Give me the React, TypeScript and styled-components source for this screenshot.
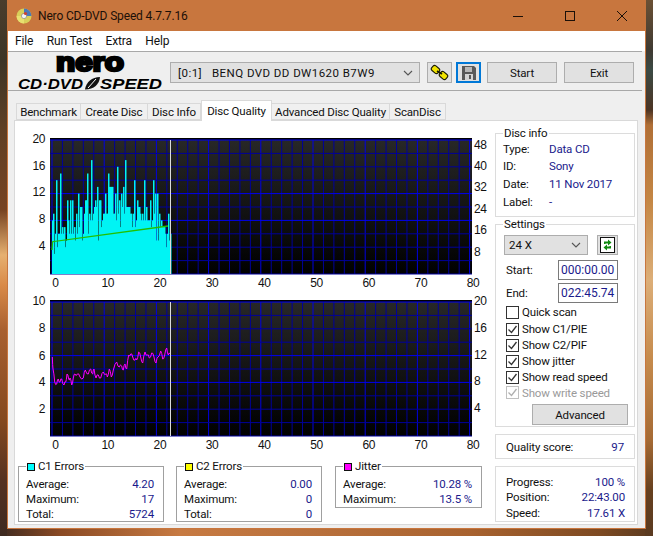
import React from 'react';
import styled, { createGlobalStyle } from 'styled-components';

const GlobalStyle = createGlobalStyle`
  html, body {
    margin: 0;
    padding: 0;
    background: #5a3a22;
  }
  * {
    box-sizing: border-box;
  }
`;

const UI_FONT = 'Roboto, "Liberation Sans", Arial, sans-serif';
const CHART_FONT = '"Liberation Sans", Arial, sans-serif';
const NAVY = '#1a1a8c';

const Page = styled.div`
  width: 653px;
  height: 536px;
  overflow: hidden;
  font-family: ${UI_FONT};
  font-size: 11.5px;
  letter-spacing: -0.15px;
  color: #111;
  background:
    linear-gradient(to bottom, #4a3d2c 0, #3c3426 60px, #5f3f24 130px, #764322 210px, #e6b070 255px, #d98a48 285px, #a86030 330px, #84491f 420px, #553120 480px, #3e2a20 536px) left top / 7px 100% no-repeat,
    linear-gradient(to bottom, #6b5034 0, #3f3a32 50px, #3b4a44 70px, #4c3424 110px, #b06f36 125px, #c48644 200px, #dcae78 280px, #c58a4c 360px, #a56a34 440px, #66401f 490px, #5a3a20 536px) right top / 8px 100% no-repeat,
    linear-gradient(to right, #3e2a20 0, #8a4a24 60px, #c77a42 180px, #b8703c 320px, #a8622f 470px, #7d4a22 600px, #5a3a20 653px);
`;

const Window = styled.div`
  width: 639px;
  height: 529px;
  margin-left: 7px;
  display: flex;
  flex-direction: column;
  background: #efefef;
  border: 1px solid #c8763e;
  border-top: none;
`;

const TitleBar = styled.div`
  height: 31px;
  flex-shrink: 0;
  display: flex;
  align-items: center;
  padding-left: 8px;
  gap: 6px;
  background: #c8763e;
  color: #1c1008;
  font-size: 12px;
  letter-spacing: -0.15px;
`;

const TitleText = styled.span`
  flex: 1;
  white-space: nowrap;
`;

const ControlButton = styled.div`
  width: 46px;
  height: 31px;
  display: flex;
  align-items: center;
  justify-content: center;
`;

const MenuBar = styled.div`
  height: 20px;
  flex-shrink: 0;
  display: flex;
  align-items: center;
  gap: 13.5px;
  padding-left: 7px;
  background: #fff;
  font-size: 12px;
`;

const Toolbar = styled.div`
  height: 40px;
  flex-shrink: 0;
  display: flex;
  align-items: flex-start;
  margin-right: 3px;
  padding-top: 10px;
  border-top: 1px solid #a8a8a8;
  border-bottom: 1px solid #a8a8a8;
`;

const Logo = styled.svg`
  width: 162px;
  height: 46px;
  margin-top: -16px;
  flex-shrink: 0;
  overflow: visible;
`;

const DriveSelect = styled.div`
  width: 250px;
  height: 21px;
  display: flex;
  align-items: center;
  justify-content: space-between;
  padding: 0 6px 0 7px;
  background: #e1e1e1;
  border: 1px solid #adadad;
  white-space: pre;
  letter-spacing: 0.45px;
`;

const IconButton = styled.div<{ $focused?: boolean }>`
  width: 25px;
  height: 21px;
  margin-left: ${props => (props.$focused ? '4px' : '7px')};
  display: flex;
  align-items: center;
  justify-content: center;
  background: #e1e1e1;
  border: ${props => (props.$focused ? '2px solid #0078d7' : '1px solid #adadad')};
`;

const ActionButton = styled.div<{ $gap: number }>`
  width: 70px;
  height: 21px;
  margin-left: ${props => props.$gap}px;
  display: flex;
  align-items: center;
  justify-content: center;
  background: #e1e1e1;
  border: 1px solid #adadad;
`;

const TabRow = styled.div`
  height: 29px;
  flex-shrink: 0;
  display: flex;
  align-items: flex-end;
  padding-left: 8px;
`;

const Tab = styled.div<{ $active?: boolean; $width: number }>`
  width: ${props => props.$width}px;
  height: ${props => (props.$active ? '21px' : '17px')};
  margin-bottom: ${props => (props.$active ? '-1px' : '0')};
  display: flex;
  align-items: center;
  justify-content: center;
  position: relative;
  z-index: ${props => (props.$active ? 1 : 0)};
  background: ${props => (props.$active ? '#fff' : '#f0f0f0')};
  border: 1px solid #d9d9d9;
  border-bottom: ${props => (props.$active ? 'none' : '1px solid #d9d9d9')};
  border-left: ${props => (props.$active ? '1px solid #d9d9d9' : 'none')};
  white-space: nowrap;

  &:first-child {
    border-left: 1px solid #d9d9d9;
  }
`;

const Panel = styled.div`
  flex: 1;
  display: flex;
  margin: 0 7px 3px 6px;
  background: #fff;
  border: 1px solid #d9d9d9;
`;

const LeftColumn = styled.div`
  width: 480px;
  flex-shrink: 0;
  padding-top: 9px;
`;

const ChartSvg = styled.svg`
  display: block;
  width: 480px;
  height: 162px;
`;

const ErrorRow = styled.div`
  display: flex;
  align-items: flex-start;
  margin-top: 12px;
  padding-left: 3px;
`;

const Group = styled.div<{ $height: number; $width?: number }>`
  position: relative;
  width: ${props => (props.$width ? `${props.$width}px` : 'auto')};
  height: ${props => props.$height}px;
  flex-shrink: 0;
  border: 1px solid #dcdcdc;
`;

const ErrorGroup = styled(Group)<{ $gap: number }>`
  margin-right: ${props => props.$gap}px;
  padding: 9px 9px 0 7px;
  border-color: #a0a0a0;
`;

const GroupTitle = styled.div`
  position: absolute;
  top: -8px;
  left: 7px;
  display: flex;
  align-items: center;
  gap: 3px;
  padding: 0 1px;
  background: #fff;
  line-height: 15px;
  white-space: nowrap;
`;

const Swatch = styled.span<{ $color: string }>`
  width: 8px;
  height: 8px;
  background: ${props => props.$color};
  border: 1px solid #111;
`;

const StatRow = styled.div`
  height: 15px;
  display: flex;
  align-items: center;
  justify-content: space-between;
`;

const StatValue = styled.span`
  color: ${NAVY};
`;

const Sidebar = styled.div`
  width: 140px;
  flex-shrink: 0;
  display: flex;
  flex-direction: column;
  gap: 7px;
  padding-top: 12px;
`;

const InfoBody = styled.div`
  padding: 6px 7px 0;
`;

const InfoRow = styled.div`
  height: 17.6px;
  display: grid;
  grid-template-columns: 46px 1fr;
  align-items: center;
`;

const SettingsRow = styled.div`
  display: flex;
  gap: 9px;
  padding: 10px 0 0 8px;
`;

const SpeedSelect = styled(DriveSelect)`
  width: 84px;
  height: 20px;
  padding-left: 4px;
  letter-spacing: 0;
`;

const RefreshButton = styled.div`
  width: 21px;
  height: 20px;
  display: flex;
  align-items: center;
  justify-content: center;
  background: #e1e1e1;
  border: 1px solid #adadad;
`;

const TimeRow = styled.div<{ $top: number }>`
  display: flex;
  align-items: center;
  justify-content: space-between;
  margin-top: ${props => props.$top}px;
  padding: 0 16px 0 10px;
`;

const TimeInput = styled.input`
  width: 60px;
  height: 20px;
  padding: 0 2px;
  border: 1px solid #7a7a7a;
  background: #fff;
  color: ${NAVY};
  font-family: ${UI_FONT};
  font-size: 12px;
`;

const CheckList = styled.div`
  display: flex;
  flex-direction: column;
  margin-top: 1px;
  padding-left: 10px;
`;

const CheckRow = styled.div<{ $disabled?: boolean; $top?: number; $height?: number }>`
  height: ${props => props.$height ?? 16}px;
  margin-top: ${props => props.$top ?? 0}px;
  display: flex;
  align-items: center;
  gap: 3px;
  color: ${props => (props.$disabled ? '#9a9a9a' : '#111')};
`;

const CheckBox = styled.span<{ $disabled?: boolean }>`
  width: 13px;
  height: 13px;
  display: flex;
  align-items: center;
  justify-content: center;
  border: 1px solid ${props => (props.$disabled ? '#c0c0c0' : '#333')};
  background: #fff;
`;

const AdvancedButton = styled.div`
  width: 96px;
  height: 21px;
  margin: 4px 0 0 36px;
  display: flex;
  align-items: center;
  justify-content: center;
  background: #e1e1e1;
  border: 1px solid #adadad;
`;

const ScoreBody = styled.div`
  height: 100%;
  display: flex;
  align-items: center;
  justify-content: space-between;
  padding: 0 10px;
`;

const ProgressBody = styled.div`
  padding: 7px 9px 0 10px;
`;

const ProgressRow = styled(StatRow)`
  height: 15.6px;
`;

// per pixel C1 counts read off the graph, x starts at 52
const C1_BARS = [
  8, 9, 3, 6, 14, 4, 6, 6, 15, 6, 7, 6, 7, 4, 5, 11, 8, 6, 11, 6, 11, 6, 7, 5, 9, 6, 12, 7, 10, 10, 5, 6, 9, 11, 11, 15, 6, 9, 8, 17,
  8, 9, 10, 11, 10, 13, 5, 11, 11, 7, 8, 9, 9, 12, 9, 9, 15, 13, 13, 13, 13, 9, 9, 12, 8, 16, 9, 11, 7, 12, 10, 13, 9, 17, 10, 10, 10, 10, 9, 9,
  7, 9, 14, 7, 8, 11, 10, 10, 9, 8, 9, 8, 14, 8, 10, 8, 8, 8, 11, 7, 8, 14, 9, 12, 5, 12, 5, 9, 7, 8, 7, 7, 7, 6, 4, 6, 9, 5, 6,
];

// jitter trace in graph pixels
const JITTER = [
  [52.3, 195], [53, 207], [54.7, 220], [56.7, 222], [58.3, 217], [60, 220], [61.7, 217], [64, 223], [65.7, 220], [67, 212],
  [68.7, 217], [70, 216], [71.7, 223], [73.3, 216], [75, 212], [77.3, 212], [80, 215], [83.3, 216], [85.3, 208], [88.3, 212],
  [90.7, 207], [92.7, 212], [94, 207], [96, 216], [98.3, 213], [100.7, 216], [103.3, 210], [106, 212], [107.3, 215], [109.3, 207],
  [111.3, 215], [113.3, 208], [116.7, 200], [119.3, 205], [121.7, 204], [123.3, 208], [125, 202], [126.7, 207], [128.7, 193],
  [130.7, 192], [132.7, 195], [135, 198], [136.7, 198], [138.7, 190], [140.7, 195], [142.7, 201], [145, 190], [147.3, 193],
  [149.3, 196], [151.7, 191], [154, 195], [156, 201], [158, 195], [160.7, 189], [162.7, 197], [164.7, 193], [166.7, 186],
  [168.3, 193], [170, 192],
];

// midpoints nudged up and down so the trace keeps its jagged look
const jitterPoints = JITTER.flatMap((p, i) => {
  const next = JITTER[i + 1];
  if (!next) return [p.join(',')];
  const midX = (p[0] + next[0]) / 2;
  const midY = (p[1] + next[1]) / 2 + (i % 2 === 0 ? 1.6 : -1.6);
  return [p.join(','), `${midX},${midY}`];
}).join(' ');

const PLOT_LEFT = 52;
const PLOT_RIGHT = 472;
const PLOT_TOP = 140;
const PLOT_BOTTOM = 274;
const MAJOR_ROWS = [0, 4, 6];

const xFor = (value: number) => PLOT_LEFT + value * 5.22;
const yForRow = (row: number) => PLOT_TOP + row * 13.4;

type Tick = { label: string; y: number };

type ChartProps = {
  id: string;
  left: Tick[];
  right: Tick[];
  children: React.ReactNode;
};

const Chart = ({ id, left, right, children }: ChartProps) => {
  const rows = Array.from({ length: 11 }, (_, i) => i);
  const cols = Array.from({ length: 41 }, (_, i) => i * 2);
  const labels = Array.from({ length: 9 }, (_, i) => i * 10);

  return (
    <ChartSvg viewBox="15 130 480 162">
      <defs>
        <linearGradient id={id} x1="0" y1="0" x2="0" y2="1">
          <stop offset="0" stopColor="#282828" />
          <stop offset="1" stopColor="#000000" />
        </linearGradient>
      </defs>
      <rect x={50} y={138} width={422} height={136} fill={`url(#${id})`} />
      <rect x={50} y={138} width={422} height={2} fill="#000" />
      {cols.map(v => (
        <line
          key={v}
          x1={xFor(v)}
          x2={xFor(v)}
          y1={PLOT_TOP}
          y2={PLOT_BOTTOM}
          stroke={v % 10 === 0 ? '#0000e0' : '#00009a'}
          strokeWidth={1}
        />
      ))}
      {rows.map(r => (
        <line
          key={r}
          x1={PLOT_LEFT - 2}
          x2={PLOT_RIGHT}
          y1={yForRow(r)}
          y2={yForRow(r)}
          stroke={MAJOR_ROWS.includes(r) ? '#0000f0' : '#00009a'}
          strokeWidth={1}
        />
      ))}
      {children}
      <line x1={170.5} x2={170.5} y1={PLOT_TOP} y2={PLOT_BOTTOM} stroke="#dcdcdc" strokeWidth={1} />
      <g fontFamily={CHART_FONT} fontSize={12} letterSpacing={-0.4} fill="#111">
        {left.map(t => (
          <text key={t.label} x={45} y={t.y + 4} textAnchor="end">
            {t.label}
          </text>
        ))}
        {right.map(t => (
          <text key={t.label} x={474} y={t.y + 4}>
            {t.label}
          </text>
        ))}
        {labels.map(v => (
          <text key={v} x={xFor(v) + 3.5} y={287} textAnchor="middle">
            {v}
          </text>
        ))}
      </g>
    </ChartSvg>
  );
};

const AppIcon = () => (
  <svg width="16" height="16" viewBox="0 0 16 16">
    <circle cx="8" cy="8" r="7.5" fill="#d8cf5a" />
    <path d="M8 .5A7.5 7.5 0 0 1 15.5 8H8z" fill="#4a78b8" />
    <path d="M8 8v7.5A7.5 7.5 0 0 1 .5 8z" fill="#e8e070" />
    <circle cx="8" cy="8" r="2.6" fill="#f4f4f4" stroke="#777" strokeWidth="0.6" />
    <circle cx="9.5" cy="5.5" r="1.6" fill="#d04030" />
  </svg>
);

const NeroLogo = () => (
  <Logo viewBox="8 46 162 46">
    <text
      x={56}
      y={70.5}
      fontFamily={CHART_FONT}
      fontWeight={700}
      fontSize={26}
      letterSpacing={0}
      textLength={68}
      lengthAdjust="spacingAndGlyphs"
      stroke="#000"
      strokeWidth={2.6}
    >
      nero
    </text>
    <g fontFamily={CHART_FONT} fontWeight={700} fontStyle="italic" fontSize={14.5} letterSpacing={0}>
      <text x={18} y={88.7} textLength={65} lengthAdjust="spacingAndGlyphs">
        CD·DVD
      </text>
      <text x={100} y={88.7} textLength={62} lengthAdjust="spacingAndGlyphs">
        SPEED
      </text>
    </g>
    <path d="M85 89.5C86 82 92 77 100 77C99.500 84 94 89.500 85 89.500Z" fill="#111" />
    <path d="M88 88L96 79" stroke="#fff" strokeWidth="1" />
  </Logo>
);

const Chevron = () => (
  <svg width="10" height="6" viewBox="0 0 10 6">
    <path d="M1 1l4 4 4-4" fill="none" stroke="#555" strokeWidth="1.1" />
  </svg>
);

const ChainIcon = () => (
  <svg width="19" height="17" viewBox="0 0 19 17">
    <g fill="#f2e400" stroke="#1a1a00" strokeWidth="1.1">
      <rect x="1.500" y="2.500" width="8" height="6" rx="2" transform="rotate(40 5.500 5.500)" />
      <rect x="9.500" y="8.500" width="8" height="6" rx="2" transform="rotate(40 13.500 11.500)" />
    </g>
    <path d="M7 7l5 3" stroke="#1a1a00" strokeWidth="2" />
  </svg>
);

const FloppyIcon = () => (
  <svg width="14" height="14" viewBox="0 0 14 14">
    <path d="M0 0h12l2 2v12H0z" fill="#595959" />
    <rect x="3" y="1" width="7" height="5" fill="#b8b8b8" />
    <rect x="3" y="8" width="8" height="6" fill="#d4d4d4" />
    <rect x="7" y="9" width="2" height="4" fill="#595959" />
  </svg>
);

const RefreshIcon = () => (
  <svg width="15" height="16" viewBox="0 0 15 16">
    <rect x="0.500" y="0.500" width="14" height="15" fill="#fff" stroke="#111" />
    <path d="M4 7V4.500h4V2.500l3.500 3-3.500 3V6.500H5.500V7z" fill="#108a10" />
    <path d="M11 9v2.500H7v2l-3.500-3 3.500-3v2h2.500V9z" fill="#108a10" />
  </svg>
);

const CheckMark = ({ color }: { color: string }) => (
  <svg width="11" height="11" viewBox="0 0 11 11">
    <path d="M1.500 5.500l3 3 5-6.500" fill="none" stroke={color} strokeWidth="1.300" />
  </svg>
);

const App = () => {
  return (
    <Page>
      <GlobalStyle />
      <Window>
        <TitleBar>
          <AppIcon />
          <TitleText>Nero CD-DVD Speed 4.7.7.16</TitleText>
          <ControlButton>
            <svg width="10" height="10" viewBox="0 0 10 10">
              <path d="M0 5.500h10" stroke="#1c1008" />
            </svg>
          </ControlButton>
          <ControlButton>
            <svg width="10" height="10" viewBox="0 0 10 10">
              <rect x="0.500" y="0.500" width="9" height="9" fill="none" stroke="#1c1008" />
            </svg>
          </ControlButton>
          <ControlButton>
            <svg width="10" height="10" viewBox="0 0 10 10">
              <path d="M0 0l10 10M10 0L0 10" stroke="#1c1008" />
            </svg>
          </ControlButton>
        </TitleBar>
        <MenuBar>
          <span>File</span>
          <span>Run Test</span>
          <span>Extra</span>
          <span>Help</span>
        </MenuBar>
        <Toolbar>
          <NeroLogo />
          <DriveSelect>
            <span>[0:1]   BENQ DVD DD DW1620 B7W9</span>
            <Chevron />
          </DriveSelect>
          <IconButton>
            <ChainIcon />
          </IconButton>
          <IconButton $focused>
            <FloppyIcon />
          </IconButton>
          <ActionButton $gap={6}>Start</ActionButton>
          <ActionButton $gap={7}>Exit</ActionButton>
        </Toolbar>
        <TabRow>
          <Tab $width={65}>Benchmark</Tab>
          <Tab $width={67}>Create Disc</Tab>
          <Tab $width={53}>Disc Info</Tab>
          <Tab $width={71} $active>
            Disc Quality
          </Tab>
          <Tab $width={118}>Advanced Disc Quality</Tab>
          <Tab $width={56}>ScanDisc</Tab>
        </TabRow>
        <Panel>
          <LeftColumn>
            <Chart
              id="c1-bg"
              left={[
                { label: '20', y: 139 },
                { label: '16', y: 166 },
                { label: '12', y: 192 },
                { label: '8', y: 219 },
                { label: '4', y: 246 },
              ]}
              right={[
                { label: '48', y: 145 },
                { label: '40', y: 166 },
                { label: '32', y: 187 },
                { label: '24', y: 209 },
                { label: '16', y: 230 },
                { label: '8', y: 252 },
              ]}
            >
              {C1_BARS.map((value, i) => (
                <rect key={i} x={52 + i} y={PLOT_BOTTOM - value * 6.7} width={1.5} height={value * 6.7} fill="#00f4f4" />
              ))}
              <polyline points="52,250 52.500,241.700 168,226" fill="none" stroke="#22c000" strokeWidth={1.300} />
            </Chart>
            <Chart
              id="jitter-bg"
              left={[
                { label: '10', y: 139 },
                { label: '8', y: 166 },
                { label: '6', y: 194 },
                { label: '4', y: 220 },
                { label: '2', y: 247 },
              ]}
              right={[
                { label: '20', y: 139 },
                { label: '16', y: 166 },
                { label: '12', y: 193 },
                { label: '8', y: 219 },
                { label: '4', y: 246 },
              ]}
            >
              <polyline points={jitterPoints} fill="none" stroke="#ff00ff" strokeWidth={1} />
            </Chart>
            <ErrorRow>
              <ErrorGroup $width={146} $height={56} $gap={12}>
                <GroupTitle>
                  <Swatch $color="#00ffff" />
                  C1 Errors
                </GroupTitle>
                <StatRow>
                  <span>Average:</span>
                  <StatValue>4.20</StatValue>
                </StatRow>
                <StatRow>
                  <span>Maximum:</span>
                  <StatValue>17</StatValue>
                </StatRow>
                <StatRow>
                  <span>Total:</span>
                  <StatValue>5724</StatValue>
                </StatRow>
              </ErrorGroup>
              <ErrorGroup $width={146} $height={56} $gap={13}>
                <GroupTitle>
                  <Swatch $color="#ffff00" />
                  C2 Errors
                </GroupTitle>
                <StatRow>
                  <span>Average:</span>
                  <StatValue>0.00</StatValue>
                </StatRow>
                <StatRow>
                  <span>Maximum:</span>
                  <StatValue>0</StatValue>
                </StatRow>
                <StatRow>
                  <span>Total:</span>
                  <StatValue>0</StatValue>
                </StatRow>
              </ErrorGroup>
              <ErrorGroup $width={147} $height={42} $gap={0}>
                <GroupTitle>
                  <Swatch $color="#ff00ff" />
                  Jitter
                </GroupTitle>
                <StatRow>
                  <span>Average:</span>
                  <StatValue>10.28 %</StatValue>
                </StatRow>
                <StatRow>
                  <span>Maximum:</span>
                  <StatValue>13.5 %</StatValue>
                </StatRow>
              </ErrorGroup>
            </ErrorRow>
          </LeftColumn>
          <Sidebar>
            <Group $height={84}>
              <GroupTitle>Disc info</GroupTitle>
              <InfoBody>
                <InfoRow>
                  <span>Type:</span>
                  <StatValue>Data CD</StatValue>
                </InfoRow>
                <InfoRow>
                  <span>ID:</span>
                  <StatValue>Sony</StatValue>
                </InfoRow>
                <InfoRow>
                  <span>Date:</span>
                  <StatValue>11 Nov 2017</StatValue>
                </InfoRow>
                <InfoRow>
                  <span>Label:</span>
                  <StatValue>-</StatValue>
                </InfoRow>
              </InfoBody>
            </Group>
            <Group $height={203}>
              <GroupTitle>Settings</GroupTitle>
              <SettingsRow>
                <SpeedSelect>
                  <span>24 X</span>
                  <Chevron />
                </SpeedSelect>
                <RefreshButton>
                  <RefreshIcon />
                </RefreshButton>
              </SettingsRow>
              <TimeRow $top={5}>
                <span>Start:</span>
                <TimeInput readOnly value="000:00.00" />
              </TimeRow>
              <TimeRow $top={3}>
                <span>End:</span>
                <TimeInput readOnly value="022:45.74" />
              </TimeRow>
              <CheckList>
                <CheckRow>
                  <CheckBox />
                  Quick scan
                </CheckRow>
                <CheckRow $top={1}>
                  <CheckBox>
                    <CheckMark color="#333" />
                  </CheckBox>
                  Show C1/PIE
                </CheckRow>
                <CheckRow>
                  <CheckBox>
                    <CheckMark color="#333" />
                  </CheckBox>
                  Show C2/PIF
                </CheckRow>
                <CheckRow>
                  <CheckBox>
                    <CheckMark color="#333" />
                  </CheckBox>
                  Show jitter
                </CheckRow>
                <CheckRow>
                  <CheckBox>
                    <CheckMark color="#333" />
                  </CheckBox>
                  Show read speed
                </CheckRow>
                <CheckRow $disabled $height={15}>
                  <CheckBox $disabled>
                    <CheckMark color="#b0b0b0" />
                  </CheckBox>
                  Show write speed
                </CheckRow>
              </CheckList>
              <AdvancedButton>Advanced</AdvancedButton>
            </Group>
            <Group $height={25}>
              <ScoreBody>
                <span>Quality score:</span>
                <StatValue>97</StatValue>
              </ScoreBody>
            </Group>
            <Group $height={56}>
              <ProgressBody>
                <ProgressRow>
                  <span>Progress:</span>
                  <StatValue>100 %</StatValue>
                </ProgressRow>
                <ProgressRow>
                  <span>Position:</span>
                  <StatValue>22:43.00</StatValue>
                </ProgressRow>
                <ProgressRow>
                  <span>Speed:</span>
                  <StatValue>17.61 X</StatValue>
                </ProgressRow>
              </ProgressBody>
            </Group>
          </Sidebar>
        </Panel>
      </Window>
    </Page>
  );
};

export default App;
